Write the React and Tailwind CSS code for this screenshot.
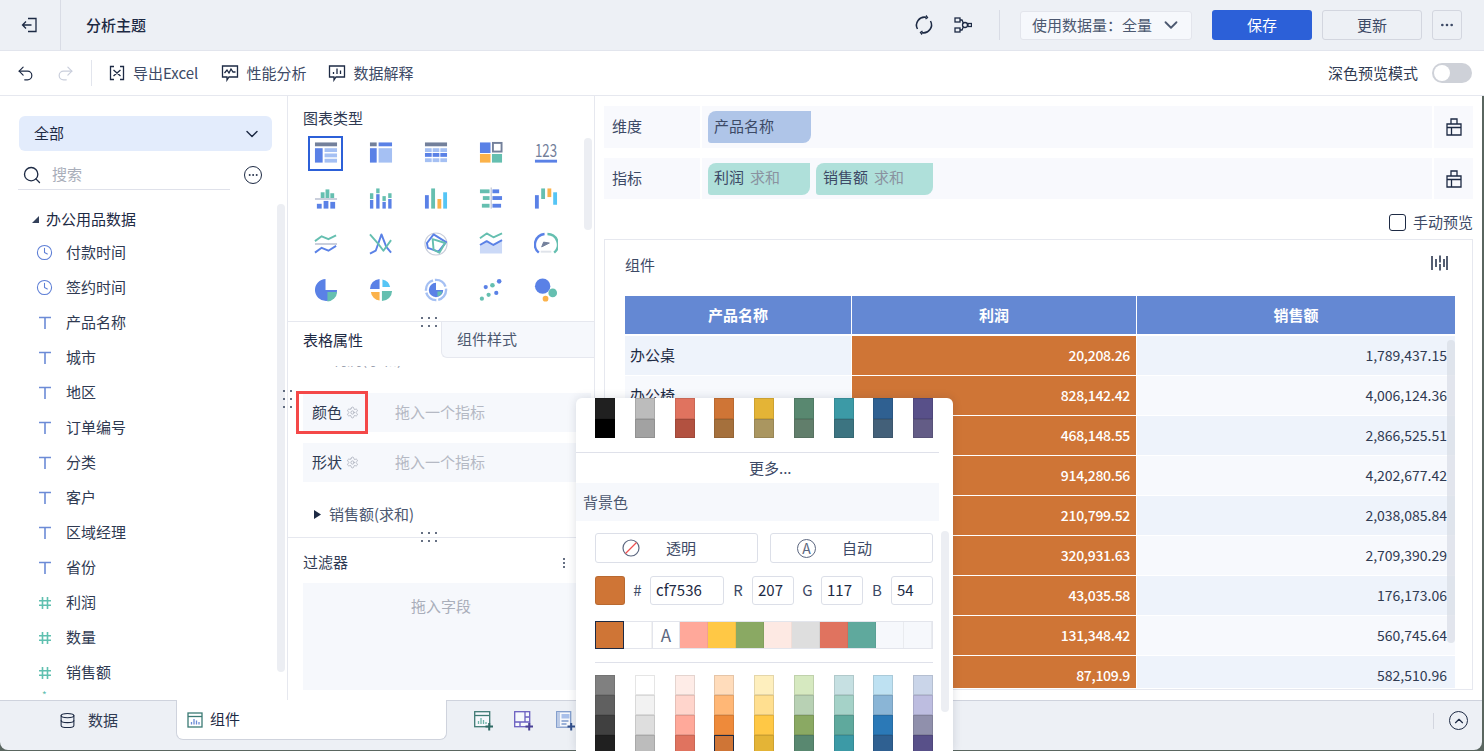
import React from "react";
import { ChevronDown, Search, Clock, Ellipsis, Database, Undo2, Redo2, ChevronUp, Settings } from "lucide-react";

const B = "#5a81e6", L = "#a5c0f3", G = "#73809b", T = "#65bfb0", O = "#fbb24a", S = "#55c5f5", LG = "#c9cedb";
const R = ({ x, y, w, h, f }) => <rect x={x} y={y} width={w} height={h} fill={f} />;
const P = ({ d, c, w = 2, f = "none" }) => <path d={d} stroke={c} strokeWidth={w} fill={f} strokeLinejoin="round" />;

const chartIcons = [
  <><R x={1} y={1} w={23} h={4} f={G} /><R x={1} y={7} w={8} h={15} f={B} /><R x={11} y={7} w={13} h={4} f={L} /><R x={11} y={12.5} w={13} h={4} f={L} /><R x={11} y={18} w={13} h={4} f={L} /></>,
  <><R x={1} y={1} w={7} h={4} f={G} /><R x={10} y={1} w={14} h={4} f={B} /><R x={1} y={7} w={7} h={15} f={B} /><R x={10} y={7} w={14} h={15} f={L} /></>,
  <><R x={1} y={1} w={23} h={4} f={G} />{[7, 12, 17.5].map((y, i) => [1, 9, 17].map((x) => <R key={x + "" + y} x={x} y={y} w={7} h={4} f={i === 1 ? B : L} />))}</>,
  <><R x={1} y={1} w={11} h={11} f={B} /><rect x={14.5} y={1.5} width={9} height={9} fill="none" stroke={G} strokeWidth="2" /><R x={1} y={13} w={11} h={9} f={O} /><R x={13.5} y={13} w={10.5} h={9} f={T} /></>,
  <><text x="1" y="16" textLength="23" lengthAdjust="spacingAndGlyphs" fontSize="19" fill={G} fontFamily="'Noto Sans CJK SC',sans-serif">123</text><R x={1} y={19} w={23} h={3} f={B} /></>,
  <><R x={7} y={5} w={4} h={6} f={T} /><R x={12} y={2} w={4} h={9} f={T} /><R x={17} y={6} w={4} h={5} f={T} /><R x={1} y={11} w={23} h={2} f={LG} /><R x={3} y={17} w={5} h={5} f={B} /><R x={10} y={14} w={5} h={8} f={B} /><R x={17} y={15} w={5} h={7} f={B} /></>,
  <><R x={1} y={6} w={3.5} h={6} f={T} /><R x={1} y={13} w={3.5} h={9} f={B} /><R x={7.5} y={1} w={3.5} h={5} f={T} /><R x={7.5} y={7} w={3.5} h={15} f={B} /><R x={14} y={9} w={3.5} h={5} f={T} /><R x={14} y={15} w={3.5} h={7} f={B} /><R x={20} y={6} w={3.5} h={5} f={T} /><R x={20} y={12} w={3.5} h={10} f={B} /></>,
  <><R x={1} y={8} w={4} h={14} f={B} /><R x={7.5} y={1} w={4} h={21} f={T} /><R x={14} y={12} w={4} h={10} f={O} /><R x={20} y={5} w={4} h={17} f={S} /></>,
  <><R x={1} y={2} w={10} h={4} f={T} /><R x={14} y={2} w={7} h={4} f={B} /><R x={4} y={9} w={7} h={4} f={T} /><R x={14} y={9} w={10} h={4} f={B} /><R x={3} y={17} w={8} h={4} f={T} /><R x={14} y={17} w={9} h={4} f={B} /><R x={12} y={0} w={1.5} h={22} f={LG} /></>,
  <><R x={1} y={8} w={4} h={14} f={B} /><R x={7.5} y={1} w={4} h={11} f={T} /><R x={14} y={1} w={4} h={9} f={O} /><R x={20} y={5} w={4} h={13} f={S} /></>,
  <><P d="M1 9l7-5 7 3 8-4" c={T} /><R x={1} y={11} w={23} h={2} f={LG} /><P d="M1 21l7-5 7 3 8-5" c={B} /></>,
  <><P d="M1 22l6-3 6-17 5 13 5 6" c={B} /><P d="M1 2l8 9 6 8 8-11" c={T} /></>,
  <><circle cx="12.5" cy="12" r="11.5" fill="none" stroke={LG} strokeWidth="1.2" /><P d="M10 2l13 8-8 10-11-4-1-5z" c={B} /><P d="M9 7l13 4-6 10-6-3z" c={T} /></>,
  <><path d="M1 14l7-5 7 4 9-5v14H1z" fill="#cbd9f7" /><P d="M1 6l7-5 7 4 9-4" c={T} /><P d="M1 13l7-4 7 4 9-5" c={B} /></>,
  <><P d="M5 21A11 11 0 0 1 11 1.6" c={B} w={2.5} /><P d="M14 1.6A11 11 0 0 1 21 21" c={T} w={2.5} /><P d="M8 15l8-4-6-1z" c={G} f={G} w={1} /><R x={7} y={19} w={11} h={2} f="#dfe3ea" /></>,
  <><path d="M12 12V0.5A11.5 11.5 0 1 0 24 12z" fill={B} /><path d="M14 14h10A10.5 10.5 0 0 1 14 24z" fill={T} /></>,
  <><path d="M11 11V0.5A10.5 10.5 0 0 0 1 11z" fill={B} /><path d="M14 9V1a10 10 0 0 1 8 8z" fill={S} /><path d="M11 14v9a10 10 0 0 1-9-9z" fill={O} /><path d="M13.5 13H24a10.5 10.5 0 0 1-10.500 10.500z" fill={T} /></>,
  <><circle cx="12.500" cy="12" r="10.500" fill="none" stroke={L} strokeWidth="2.500" strokeDasharray="14 2" /><path d="M12.500 12V4.500A7.500 7.500 0 1 0 20 12z" fill={B} /><path d="M14 13.500h5a6 6 0 0 1-5 5z" fill={T} /></>,
  <>{[[7, 9, 2.2, B], [3, 21, 2.2, T], [14, 7, 2.4, T], [10, 17, 2.2, T], [21, 3, 2.4, B], [18, 15, 2.2, B]].map(([x, y, r, f]) => <circle key={x} cx={x} cy={y} r={r} fill={f} />)}</>,
  <><circle cx="9" cy="8" r="8" fill={B} /><circle cx="19.500" cy="15" r="4.500" fill={T} /><circle cx="12" cy="21" r="3" fill={O} /></>,
];

const fields = [
  ["c", "付款时间"], ["c", "签约时间"], ["t", "产品名称"], ["t", "城市"], ["t", "地区"], ["t", "订单编号"], ["t", "分类"],
  ["t", "客户"], ["t", "区域经理"], ["t", "省份"], ["h", "利润"], ["h", "数量"], ["h", "销售额"],
];

const rows = [
  ["办公桌", "20,208.26", "1,789,437.15"], ["办公椅", "828,142.42", "4,006,124.36"], ["", "468,148.55", "2,866,525.51"],
  ["", "914,280.56", "4,202,677.42"], ["", "210,799.52", "2,038,085.84"], ["", "320,931.63", "2,709,390.29"],
  ["", "43,035.58", "176,173.06"], ["", "131,348.42", "560,745.64"], ["", "87,109.9", "582,510.96"],
];

const topPalette = [
  ["bg-[#202020]", "bg-[#000000]"], ["bg-[#bcbcbc]", "bg-[#a2a2a2]"], ["bg-[#e0735f]", "bg-[#b25140]"], ["bg-[#cf7536]", "bg-[#a5703c]"],
  ["bg-[#e4b436]", "bg-[#aa9660]"], ["bg-[#598870]", "bg-[#617e6b]"], ["bg-[#3c9aa6]", "bg-[#3c7481]"], ["bg-[#2f6091]", "bg-[#436079]"], ["bg-[#585089]", "bg-[#635c86]"],
];
const palette = [
  ["bg-[#808080]", "bg-[#606060]", "bg-[#404040]", "bg-[#202020]"],
  ["bg-[#ffffff]", "bg-[#f2f2f2]", "bg-[#dedede]", "bg-[#bcbcbc]"],
  ["bg-[#feece7]", "bg-[#ffd5cc]", "bg-[#ffa99a]", "bg-[#e0735f]"],
  ["bg-[#ffdcbb]", "bg-[#ffb776]", "bg-[#ee8a3a]", "bg-[#cf7536]"],
  ["bg-[#feefbe]", "bg-[#ffdf90]", "bg-[#ffc845]", "bg-[#e4b436]"],
  ["bg-[#d6e9c0]", "bg-[#b8d1b4]", "bg-[#8aa963]", "bg-[#598870]"],
  ["bg-[#c6e0e2]", "bg-[#a5d2c8]", "bg-[#5fa99d]", "bg-[#3c9aa6]"],
  ["bg-[#bee1f2]", "bg-[#8ab5d6]", "bg-[#2b79b7]", "bg-[#2f6091]"],
  ["bg-[#cad5e9]", "bg-[#bdbde0]", "bg-[#9090ac]", "bg-[#585089]"],
];
const recent = ["bg-[#ffffff]", "A", "bg-[#ffa89a]", "bg-[#ffc845]", "bg-[#8aa963]", "bg-[#fde9e3]", "bg-[#dedede]", "bg-[#e0735f]", "bg-[#5fa99d]", "bg-[#f6f8fc]", "bg-[#f6f8fc]"];

const Dots = ({ className, cols = "grid-cols-3" }) => (
  <div className={"absolute grid gap-x-[5px] gap-y-[6px] " + cols + " " + className}>
    {[0, 1, 2, 3, 4, 5].map((i) => <span key={i} className="w-[2px] h-[2px] rounded-full bg-[#33405a]" />)}
  </div>
);

const Ic = ({ children, w = 18, h = 18, className = "" }) => (
  <svg width={w} height={h} viewBox={`0 0 ${w} ${h}`} fill="none" stroke="currentColor" strokeWidth="1.300" className={"shrink-0 " + className}>{children}</svg>
);

const FieldIcon = ({ t }) => {
  if (t === "c") return <Clock size={17} strokeWidth={1.500} className="text-[#5e7fd6]" />;
  if (t === "t") return <span className="w-[17px] h-[17px] flex items-center justify-center"><Ic w={14} h={14} className="text-[#6c8bd6]"><path d="M1 1.500h12M7 1.500V13" strokeWidth="1.600" /></Ic></span>;
  return <span className="w-[17px] flex justify-center"><Ic w={16} h={16} className="text-[#5fc0b0]"><path d="M5.500 2v12M10.500 2v12M2 5.800h12M2 10.200h12" strokeWidth="1.600" /></Ic></span>;
};

const Bag = () => (
  <Ic w={16} h={18} className="text-[#1d2a44]"><path d="M1 6h14v11H1zM5 6V1h6v5M1 9.500h14M5.500 9.500V17" /></Ic>
);

const Input = ({ w, v }) => <div className={"h-[29px] border border-[#dcdfe8] rounded-[3px] flex items-center pl-[5px] text-[#1d2a44] " + w}>{v}</div>;

function Popup() {
  return (
    <div className="absolute left-[576px] top-[398px] w-[377px] h-[353px] bg-white rounded-t-[6px] shadow-[0_0_10px_rgba(30,40,70,0.15)] overflow-hidden">
      <div className="pl-[19px] flex w-[357px] justify-between">
        {topPalette.map((c, i) => (
          <div key={i} className="w-[20px] flex flex-col">
            <div className={"h-[21px] border border-black/10 " + c[0]} />
            <div className={"h-[19px] border border-black/10 " + c[1]} />
          </div>
        ))}
      </div>
      <div className="mt-[14px] w-[363px] border-t border-[#dfe1ea] h-[31px] flex items-center pl-[173px] text-[#3d4a66]">更多...</div>
      <div className="w-[363px] h-[38px] bg-[#f6f8fc] flex items-center pl-[7px] text-[#4c5870]">背景色</div>
      <div className="pl-[19px] w-[357px] pt-[12px]">
        <div className="flex gap-[12px]">
          <div className="w-[163px] h-[30px] border border-[#dcdfe8] rounded-[3px] flex items-center pl-[26px] gap-[26px] text-[#3d4a66]">
            <svg width="18" height="18" viewBox="0 0 18 18" fill="none"><circle cx="9" cy="9" r="8" stroke="#5c6780" strokeWidth="1.200" /><path d="M3.500 14.500l11-11" stroke="#f05050" strokeWidth="1.200" /></svg>
            <span>透明</span>
          </div>
          <div className="w-[163px] h-[30px] border border-[#dcdfe8] rounded-[3px] flex items-center pl-[26px] gap-[26px] text-[#3d4a66]">
            <span className="w-[19px] h-[19px] rounded-full border border-[#5c6780] flex items-center justify-center text-[14px] text-[#5c6780] leading-none">A</span>
            <span>自动</span>
          </div>
        </div>
        <div className="flex items-center mt-[13px] h-[29px] text-[#3d4a66]">
          <div className="w-[30px] h-[29px] rounded-[3px] bg-[#cf7536] border border-black/10" />
          <span className="w-[25px] text-center">#</span>
          <Input w="w-[74px]" v="cf7536" />
          <span className="w-[28px] text-center">R</span>
          <Input w="w-[42px]" v="207" />
          <span className="w-[27px] text-center">G</span>
          <Input w="w-[42px]" v="117" />
          <span className="w-[28px] text-center">B</span>
          <Input w="w-[42px]" v="54" />
        </div>
        <div className="flex mt-[16px] h-[28px] w-[338px] border-b border-r border-t border-[#e3e5ec]">
          <div className="w-[29px] h-[28px] -mt-px bg-[#cf7536] border border-[#1d2a44] shrink-0" />
          {recent.map((c, i) => c === "A"
            ? <div key={i} className="w-[28px] flex items-center justify-center border-x border-[#e3e5ec] text-[17px] text-[#5c6780]">A</div>
            : <div key={i} className={"w-[28px] border-r border-black/5 " + c} />)}
        </div>
        <div className="mt-[13px] border-t border-[#dfe1ea]" />
        <div className="flex justify-between mt-[12px]">
          {palette.map((col, i) => (
            <div key={i} className="w-[20px] flex flex-col">
              {col.map((c, j) => (
                <div key={j} className={"h-[20px] border " + c + (i === 3 && j === 3 ? " border-[#1d2a44]" : " border-black/10")} />
              ))}
            </div>
          ))}
        </div>
      </div>
      <div className="absolute left-[365px] top-[133px] w-[8px] h-[181px] rounded-[4px] bg-[#eceef3]" />
    </div>
  );
}

export default function App() {
  return (
    <div className="relative w-[1484px] h-[751px] overflow-hidden flex flex-col bg-[#5a6660] text-[15px] text-[#1d2a44] font-['Noto_Sans_CJK_SC','Noto_Sans',sans-serif]">
      {/* header */}
      <header className="h-[51px] shrink-0 bg-[#edf0f5] border-b border-[#e2e5ed] flex items-center">
        <div className="w-[61px] h-full border-r border-[#d9dce5] flex items-center justify-center">
          <Ic w={18} h={18} className="text-[#1d2a44]"><path d="M7 2.500h8v13H7" /><path d="M10.500 9H1.500M5 5.500L1.500 9 5 12.500" /></Ic>
        </div>
        <div className="ml-[25px] font-medium">分析主题</div>
        <div className="ml-auto flex items-center">
          <Ic w={20} h={20}>
            <path d="M3.500 14A8 8 0 0 1 12 2.300" strokeWidth="1.500" /><path d="M16.500 6A8 8 0 0 1 8 17.700" strokeWidth="1.500" />
            <path d="M12 .5l1.500 2-2 1.500M8 19.500l-1.500-2 2-1.500" strokeWidth="1.300" />
          </Ic>
          <Ic w={18} h={18} className="ml-[20px] text-[#1d2a44]">
            <rect x="1" y="2" width="5" height="4" /><rect x="1" y="12" width="5" height="4" /><circle cx="11" cy="9" r="2.500" /><rect x="14" y="7.500" width="3.500" height="3" /><path d="M6 4h2l1.500 3.500M6 14h2l1.500-3.500" />
          </Ic>
          <div className="ml-[27px] w-px h-[30px] bg-[#d9dce5]" />
          <div className="ml-[20px] w-[172px] h-[29px] bg-[#f6f8fc] border border-[#e3e5ec] rounded-[3px] flex items-center pl-[11px] text-[#4c5870]">
            <span>使用数据量：全量</span>
            <ChevronDown size={22} strokeWidth={2} className="ml-[8px] text-[#4c5870]" />
          </div>
          <button className="ml-[20px] w-[100px] h-[30px] rounded-[3px] bg-[#2c60d8] text-white">保存</button>
          <button className="ml-[10px] w-[100px] h-[30px] rounded-[3px] border border-[#d3d6df] text-[#3d4a66]">更新</button>
          <button className="ml-[10px] mr-[22px] w-[30px] h-[30px] rounded-[3px] border border-[#d3d6df] flex items-center justify-center text-[#3d4a66]"><Ellipsis size={16} /></button>
        </div>
      </header>

      {/* toolbar */}
      <div className="h-[45px] shrink-0 bg-white border-b border-[#e6e8ef] flex items-center text-[#3d4a66]">
        <Undo2 size={19} strokeWidth={1.500} className="ml-[16px] text-[#1d2a44]" />
        <Redo2 size={19} strokeWidth={1.500} className="ml-[21px] text-[#c9cedb]" />
        <div className="ml-[16px] w-px h-[26px] bg-[#e2e5ed]" />
        <Ic w={16} h={16} className="ml-[17px] text-[#1d2a44]"><path d="M5 1.500H1.500v13H5M11 1.500h3.500v13H11M4.500 5l7 6M11.500 5l-7 6" /></Ic>
        <span className="ml-[8px]">导出Excel</span>
        <Ic w={18} h={18} className="ml-[23px] text-[#1d2a44]"><path d="M1.500 2h15v11H8l-2 3v-3H1.500z" /><path d="M3.500 9L6 6l2 3 2-4 2 3h2.500" /></Ic>
        <span className="ml-[7px]">性能分析</span>
        <Ic w={18} h={18} className="ml-[22px] text-[#1d2a44]"><path d="M1.500 2h15v11H8l-2 3v-3H1.500z" /><path d="M5.500 10V8M9 10V4.500M12.500 10V6.500" /></Ic>
        <span className="ml-[7px]">数据解释</span>
        <span className="ml-auto text-[#2f3a52]">深色预览模式</span>
        <div className="ml-[14px] mr-[12px] w-[40px] h-[20px] rounded-full bg-[#ced1d8] flex items-center pl-[2px]"><span className="w-[16px] h-[16px] rounded-full bg-white" /></div>
      </div>

      {/* main */}
      <div className="relative h-[604px] w-[1482px] shrink-0 flex overflow-hidden bg-white">
        {/* left */}
        <aside className="relative w-[288px] shrink-0 border-r border-[#e6e8ef] pt-[20px] overflow-hidden">
          <div className="ml-[19px] w-[253px] h-[35px] rounded-[6px] bg-[#e3ecfc] flex items-center justify-between pl-[15px] pr-[10px] text-[#1d2a44]">
            <span>全部</span><ChevronDown size={20} strokeWidth={1.700} />
          </div>
          <div className="flex items-center mt-[9px] ml-[18px] h-[30px]">
            <div className="w-[212px] h-[30px] border-b border-[#dfe1ea] flex items-center pl-[4px]">
              <Search size={20} strokeWidth={1.600} className="text-[#1d2a44]" />
              <span className="ml-[10px] text-[#a9aeba]">搜索</span>
            </div>
            <div className="ml-[14px] w-[18px] h-[18px] rounded-full border border-[#1d2a44] flex items-center justify-center"><Ellipsis size={12} /></div>
          </div>
          <div className="mt-[15px] h-[30px] flex items-center pl-[32px] pb-[1px]">
            <svg width="7" height="7" viewBox="0 0 7 7"><path d="M7 0v7H0z" fill="#33405a" /></svg>
            <span className="ml-[7px]">办公用品数据</span>
          </div>
          {fields.map(([t, n]) => (
            <div key={n} className="h-[35px] flex items-center pl-[36px]">
              <FieldIcon t={t} /><span className="ml-[13px] text-[#2f3a52]">{n}</span>
            </div>
          ))}
          <div className="h-[10px] pl-[42px] -mt-[2px] text-[#5fc0b0] text-[10px] leading-[14px]">*</div>
          <div className="absolute left-[277px] top-[108px] w-[8px] h-[468px] rounded-[4px] bg-[#eceef3]" />
        </aside>

        {/* middle */}
        <section className="relative w-[307px] shrink-0 border-r border-[#e6e8ef] overflow-hidden">
          <div className="relative h-[226px] border-b border-[#e6e8ef] pl-[10px]">
            <div className="pl-[5px] pt-[12px] h-[34.5px] leading-[20px] text-[#2f3a52]">图表类型</div>
            <div className="grid grid-cols-[repeat(5,55px)] auto-rows-[45.500px]">
              {chartIcons.map((ic, i) => (
                <div key={i} className="flex items-center justify-center">
                  <div className={"w-[35px] h-[35px] flex items-center justify-center " + (i === 0 ? "border-2 border-[#2c60d8]" : "")}>
                    <svg width="24" height="24" viewBox="0 0 25 24">{ic}</svg>
                  </div>
                </div>
              ))}
            </div>
            <div className="absolute left-[296px] top-[42px] w-[8px] h-[92px] rounded-[4px] bg-[#eceef3]" />
          </div>
          <div className="flex h-[36px]">
            <div className="w-[153px] pl-[15px] flex items-center text-[#1d2a44]">表格属性</div>
            <div className="flex-1 pl-[15px] flex items-center bg-[#f6f8fc] border-l border-b border-[#e6e8ef] rounded-bl-[6px] text-[#4c5870]">组件样式</div>
          </div>
          <div className="h-[179px] overflow-hidden">
            <div className="mt-[8px] h-[3px] overflow-hidden pl-[44px] text-[#9aa0ae]"><div className="-mt-[17px] leading-[20px]">利润(求和)</div></div>
            <div className="relative mt-[24px] ml-[15px] w-[288px] h-[39px] bg-[#f6f8fc] flex items-center pl-[9px]">
              <span className="text-[#2f3a52]">颜色</span>
              <Settings size={13} strokeWidth={1.500} className="ml-[4px] text-[#a9aeba]" />
              <span className="ml-[36px] text-[#b5b9c4]">拖入一个指标</span>
              <div className="absolute -left-[7px] -top-[2px] w-[72px] h-[43px] border-[3px] border-[#f44848]" />
            </div>
            <div className="mt-[11px] ml-[15px] w-[288px] h-[39px] bg-[#f6f8fc] flex items-center pl-[9px]">
              <span className="text-[#2f3a52]">形状</span>
              <Settings size={13} strokeWidth={1.500} className="ml-[4px] text-[#a9aeba]" />
              <span className="ml-[36px] text-[#b5b9c4]">拖入一个指标</span>
            </div>
            <div className="mt-[19px] h-[26px] ml-[26px] flex items-center text-[#4c5870]">
              <svg width="7" height="9" viewBox="0 0 7 9"><path d="M0 0l7 4.500L0 9z" fill="#1d2a44" /></svg>
              <span className="ml-[8px]">销售额(求和)</span>
            </div>
          </div>
          <div className="border-t border-[#e6e8ef] h-[163px]">
            <div className="h-[45px] pl-[15px] pr-[29px] pt-[4px] flex items-center justify-between text-[#2f3a52]">
              <span>过滤器</span>
              <span className="flex flex-col gap-[2px]"><i className="w-[2px] h-[2px] rounded-full bg-[#33405a]" /><i className="w-[2px] h-[2px] rounded-full bg-[#33405a]" /><i className="w-[2px] h-[2px] rounded-full bg-[#33405a]" /></span>
            </div>
            <div className="ml-[15px] w-[282px] h-[107px] bg-[#f6f8fc] pt-[13px] pr-[6px] text-center leading-[20px] text-[#a9aeba]">拖入字段</div>
          </div>
          <Dots className="left-[133px] top-[221px]" />
          <Dots className="left-[133px] top-[436px]" />
        </section>

        {/* right */}
        <section className="relative flex-1 pl-[9px] pr-[9px] pt-[10px] overflow-hidden">
          <div className="flex gap-[2px] h-[42px]">
            <div className="w-[96px] bg-[#f8f9fd] flex items-center pl-[8px] pb-[2px] text-[#3d4a66]">维度</div>
            <div className="flex-1 bg-[#f8f9fd] flex items-center pl-[6px]">
              <div className="w-[103px] h-[32px] bg-[#afc5e8] rounded-tl-[8px] rounded-br-[8px] rounded-bl-[3px] flex items-center pl-[6px] pb-[2px] text-[#3d4a66]">产品名称</div>
            </div>
            <div className="w-[39px] bg-[#f8f9fd] flex items-center justify-center"><Bag /></div>
          </div>
          <div className="flex gap-[2px] h-[41px] mt-[10px]">
            <div className="w-[96px] bg-[#f8f9fd] flex items-center pl-[8px] pb-[1px] text-[#3d4a66]">指标</div>
            <div className="flex-1 bg-[#f8f9fd] flex items-center pl-[6px] gap-[6px]">
              <div className="w-[102px] h-[32px] bg-[#afe0da] rounded-tl-[8px] rounded-br-[8px] rounded-bl-[3px] flex items-center pl-[6px] pb-[2px] text-[#3d4a66]">利润<span className="ml-[6px] text-[#8a929f]">求和</span></div>
              <div className="w-[117px] h-[32px] bg-[#afe0da] rounded-tl-[8px] rounded-br-[8px] rounded-bl-[3px] flex items-center pl-[7px] pb-[2px] text-[#3d4a66]">销售额<span className="ml-[6px] text-[#8a929f]">求和</span></div>
            </div>
            <div className="w-[39px] bg-[#f8f9fd] flex items-center justify-center"><Bag /></div>
          </div>
          <div className="mt-[13px] h-[20px] flex items-center justify-end text-[#3d4a66]">
            <span className="w-[17px] h-[17px] rounded-[3px] border border-[#1d2a44] mr-[7px]" />手动预览
          </div>
          <div className="relative mt-[7px] h-[451px] border border-[#e6e8ef] pl-[20px] pr-[17px]">
            <div className="h-[50px] mb-[6px] flex items-center justify-between text-[#3d4a66]">
              <span>组件</span>
              <Ic w={18} h={18} className="text-[#1d2a44] -mt-[4px] mr-[7px]"><path d="M2 2v14M6 5v8M10 1.500v7M10 10v6.500M14 5v8M17 2v14" strokeWidth="1.500" /></Ic>
            </div>
            <div className="h-[392px] overflow-hidden">
              <div className="grid grid-cols-[226px_284px_318px] gap-[1px] auto-rows-[39px]">
                <div className="h-[38px] bg-[#6488d3] text-white font-bold flex items-center justify-center">产品名称</div>
                <div className="h-[38px] bg-[#6488d3] text-white font-bold flex items-center justify-center">利润</div>
                <div className="h-[38px] bg-[#6488d3] text-white font-bold flex items-center justify-center">销售额</div>
                {rows.map((r, i) => (
                  <React.Fragment key={i}>
                    <div className={"flex items-center pl-[5px] text-[#1d2a44] " + (i % 2 ? "bg-[#f7f9fd]" : "bg-[#eef3fb]")}>{r[0]}</div>
                    <div className="flex items-center justify-end pr-[6px] bg-[#cf7536] text-white text-[14px] font-medium tracking-[-0.3px]">{r[1]}</div>
                    <div className={"flex items-center justify-end pr-[8px] text-[#2f3a52] text-[14px] " + (i % 2 ? "bg-[#f7f9fd]" : "bg-[#eef3fb]")}>{r[2]}</div>
                  </React.Fragment>
                ))}
              </div>
            </div>
            <div className="absolute left-[842px] top-[100px] w-[8px] h-[303px] rounded-[4px] bg-[#d9dde6]/70" />
          </div>
        </section>
        <Dots cols="grid-cols-2" className="left-[283px] top-[294px]" />
      </div>

      {/* bottom bar */}
      <div className="h-[50px] w-[1482px] shrink-0 bg-[#edf0f5] border-t border-[#cfd3dd] rounded-b-[8px] flex items-start">
        <div className="w-[176px] h-[39px] flex items-center pl-[59px]">
          <Database size={17} strokeWidth={1.500} className="text-[#1d2a44]" />
          <span className="ml-[12px] text-[#2f3a52]">数据</span>
        </div>
        <div className="-mt-px w-[271px] h-[40px] bg-white border-x border-b border-[#cfd3dd] rounded-b-[7px] flex items-center pl-[10px]">
          <Ic w={16} h={16} className="text-[#3b7a74]"><rect x="1" y="1" width="14" height="14" /><path d="M1 4.500h14" /><path d="M4.500 12.500V10M7 12.500V7M9.500 12.500V8.500M12 12.500V10" className="text-[#6c8bd6]" /></Ic>
          <span className="ml-[7px] text-[#1d2a44]">组件</span>
        </div>
        <div className="flex items-start h-[39px] ml-[27px] pt-[10px]">
          <svg width="22" height="20" viewBox="0 0 22 20" fill="none">
            <rect x=".7" y=".7" width="15" height="15" fill="#f6f8fc" stroke="#3f7a74" strokeWidth="1.300" />
            <path d="M1 4.500h14" stroke="#3f7a74" strokeWidth="1.300" />
            <path d="M4.500 13v-3M7 13V7M9.500 13V9M12 13v-2" stroke="#6fb3a8" strokeWidth="1.300" />
            <path d="M11.500 15.500h7.500M15.200 12v7.500" stroke="#2f6a64" strokeWidth="2" />
          </svg>
          <svg width="22" height="20" viewBox="0 0 22 20" fill="none" className="ml-[18px]">
            <rect x=".7" y=".7" width="15" height="15" fill="#f6f8fc" stroke="#6a5fc0" strokeWidth="1.300" />
            <path d="M11 1v10M1 11h14M11 6h4M6 11v4" stroke="#6a5fc0" strokeWidth="1.300" />
            <path d="M11.500 15.500h7.500M15.200 12v7.500" stroke="#4b4296" strokeWidth="2" />
          </svg>
          <svg width="22" height="20" viewBox="0 0 22 20" fill="none" className="ml-[20px]">
            <rect x=".7" y=".7" width="14" height="15.500" fill="#f6f8fc" stroke="#7f9bcb" strokeWidth="1.300" />
            <path d="M1 1h3v15H1z" fill="#bccbe6" />
            <path d="M5.500 3h8v4.500h-8z" fill="#a9c0ea" />
            <path d="M5.500 10h7M5.500 13h5" stroke="#7f9bcb" strokeWidth="1.300" />
            <path d="M11.500 15.500h7.500M15.200 12v7.500" stroke="#33508c" strokeWidth="2" />
          </svg>
        </div>
        <div className="ml-auto flex items-center h-[39px]">
          <div className="w-px h-[16px] bg-[#d3d6df]" />
          <div className="ml-[15px] mr-[14px] w-[19px] h-[19px] rounded-full border border-[#1d2a44] flex items-center justify-center"><ChevronUp size={14} /></div>
        </div>
      </div>

      <Popup />
    </div>
  );
}
